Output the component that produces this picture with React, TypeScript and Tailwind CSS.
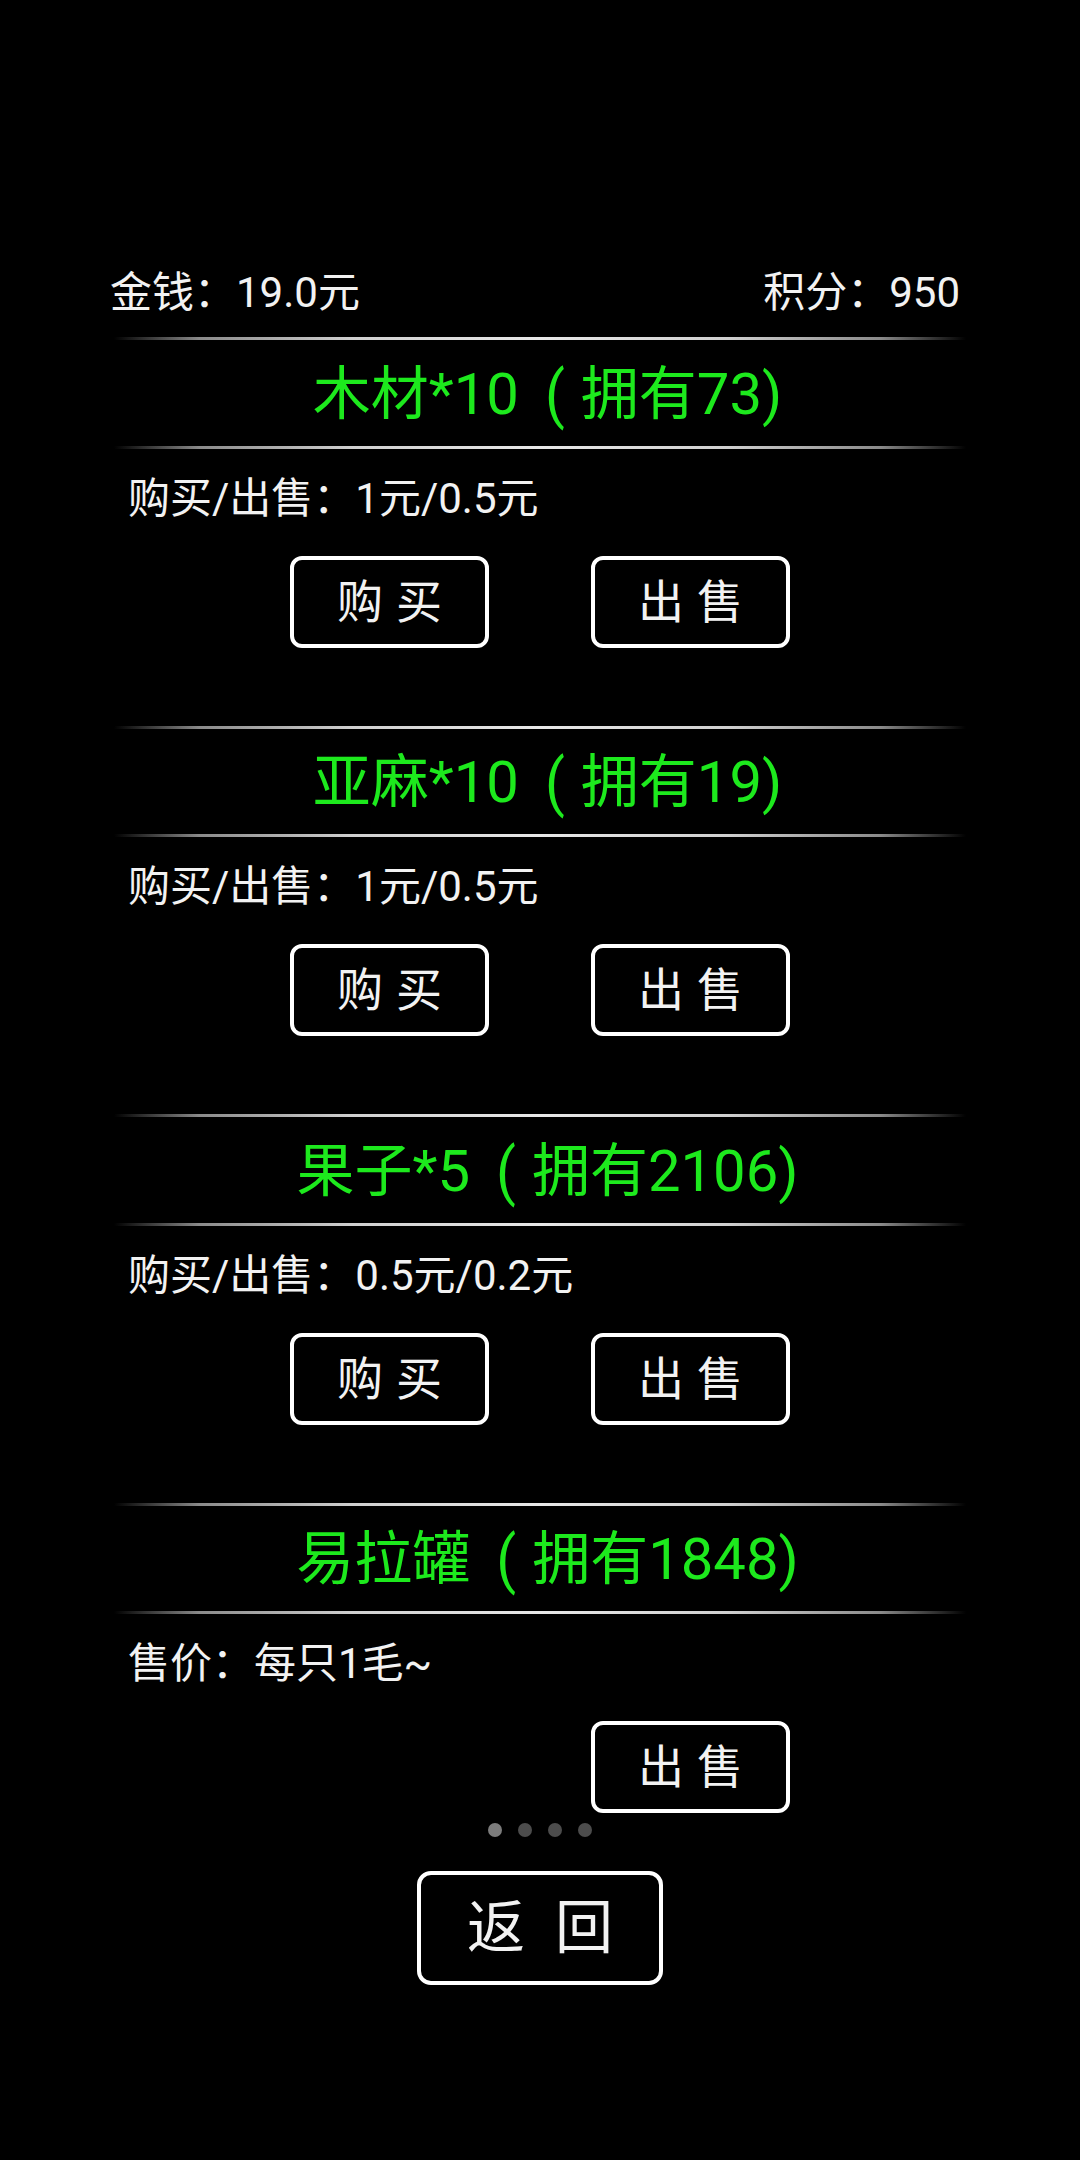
const items = [
  { name: '木材*10', owned: '73', price: '购买/出售：1元/0.5元', buy: true },
  { name: '亚麻*10', owned: '19', price: '购买/出售：1元/0.5元', buy: true },
  { name: '果子*5', owned: '2106', price: '购买/出售：0.5元/0.2元', buy: true },
  { name: '易拉罐', owned: '1848', price: '售价：每只1毛~', buy: false },
]

function Divider() {
  return (
    <div className="h-[3px] w-full bg-[linear-gradient(to_right,transparent,#8a8a8a_10%,#d0d0d0_28%,#e8e8e8_50%,#d0d0d0_72%,#8a8a8a_90%,transparent)]" />
  )
}

function Btn({ label, hidden }: { label: string; hidden?: boolean }) {
  return (
    <div
      className={`flex h-[92px] w-[199px] items-center justify-center gap-[13px] rounded-[12px] border-[4px] border-white text-[46px] leading-none text-[#f2f2f2] ${hidden ? 'invisible' : ''}`}
    >
      {label.split('').map((c) => (
        <span key={c}>{c}</span>
      ))}
    </div>
  )
}

export default function App() {
  return (
    <div className="min-h-[2160px] w-full bg-black font-['Roboto','Noto_Sans_CJK_SC',sans-serif] text-[#f2f2f2]">
      <div className="mx-auto w-[852px] pt-[269px]">
        <div className="-ml-[4px] flex h-[48px] items-center justify-between pr-[6px] text-[42px] leading-[48px]">
          <span>金钱：19.0元</span>
          <span>积分：950</span>
        </div>
        <div className="mt-[20px]">
          {items.map((it, i) => (
            <section key={it.name} className={i < items.length - 1 ? 'mb-[78px]' : ''}>
              <Divider />
              <div className="flex h-[105.5px] items-center justify-center pt-[2px] pl-[15px] text-[58px] leading-[70px] text-[#1de91d]">
                <span>
                  {it.name}
                  <span className="ml-[26px] mr-[16px] inline-block scale-y-110">(</span>
                  拥有{it.owned})
                </span>
              </div>
              <Divider />
              <div className="mt-[26px] pl-[14px] text-[42px] leading-[48px]">{it.price}</div>
              <div className="mt-[33px] flex justify-center gap-[102px]">
                <Btn label="购买" hidden={!it.buy} />
                <Btn label="出售" />
              </div>
            </section>
          ))}
        </div>
        <div className="mt-[10px] flex justify-center gap-[16px]">
          <span className="h-[14px] w-[14px] rounded-full bg-[#7c7c7c]" />
          <span className="h-[14px] w-[14px] rounded-full bg-[#4c4c4c]" />
          <span className="h-[14px] w-[14px] rounded-full bg-[#4c4c4c]" />
          <span className="h-[14px] w-[14px] rounded-full bg-[#4c4c4c]" />
        </div>
        <div className="mt-[34px] flex justify-center">
          <div className="flex h-[114px] w-[246px] items-center justify-center gap-[30px] rounded-[14px] border-[4px] border-white text-[58px] leading-none text-[#f2f2f2]">
            <span>返</span>
            <span>回</span>
          </div>
        </div>
      </div>
    </div>
  )
}
